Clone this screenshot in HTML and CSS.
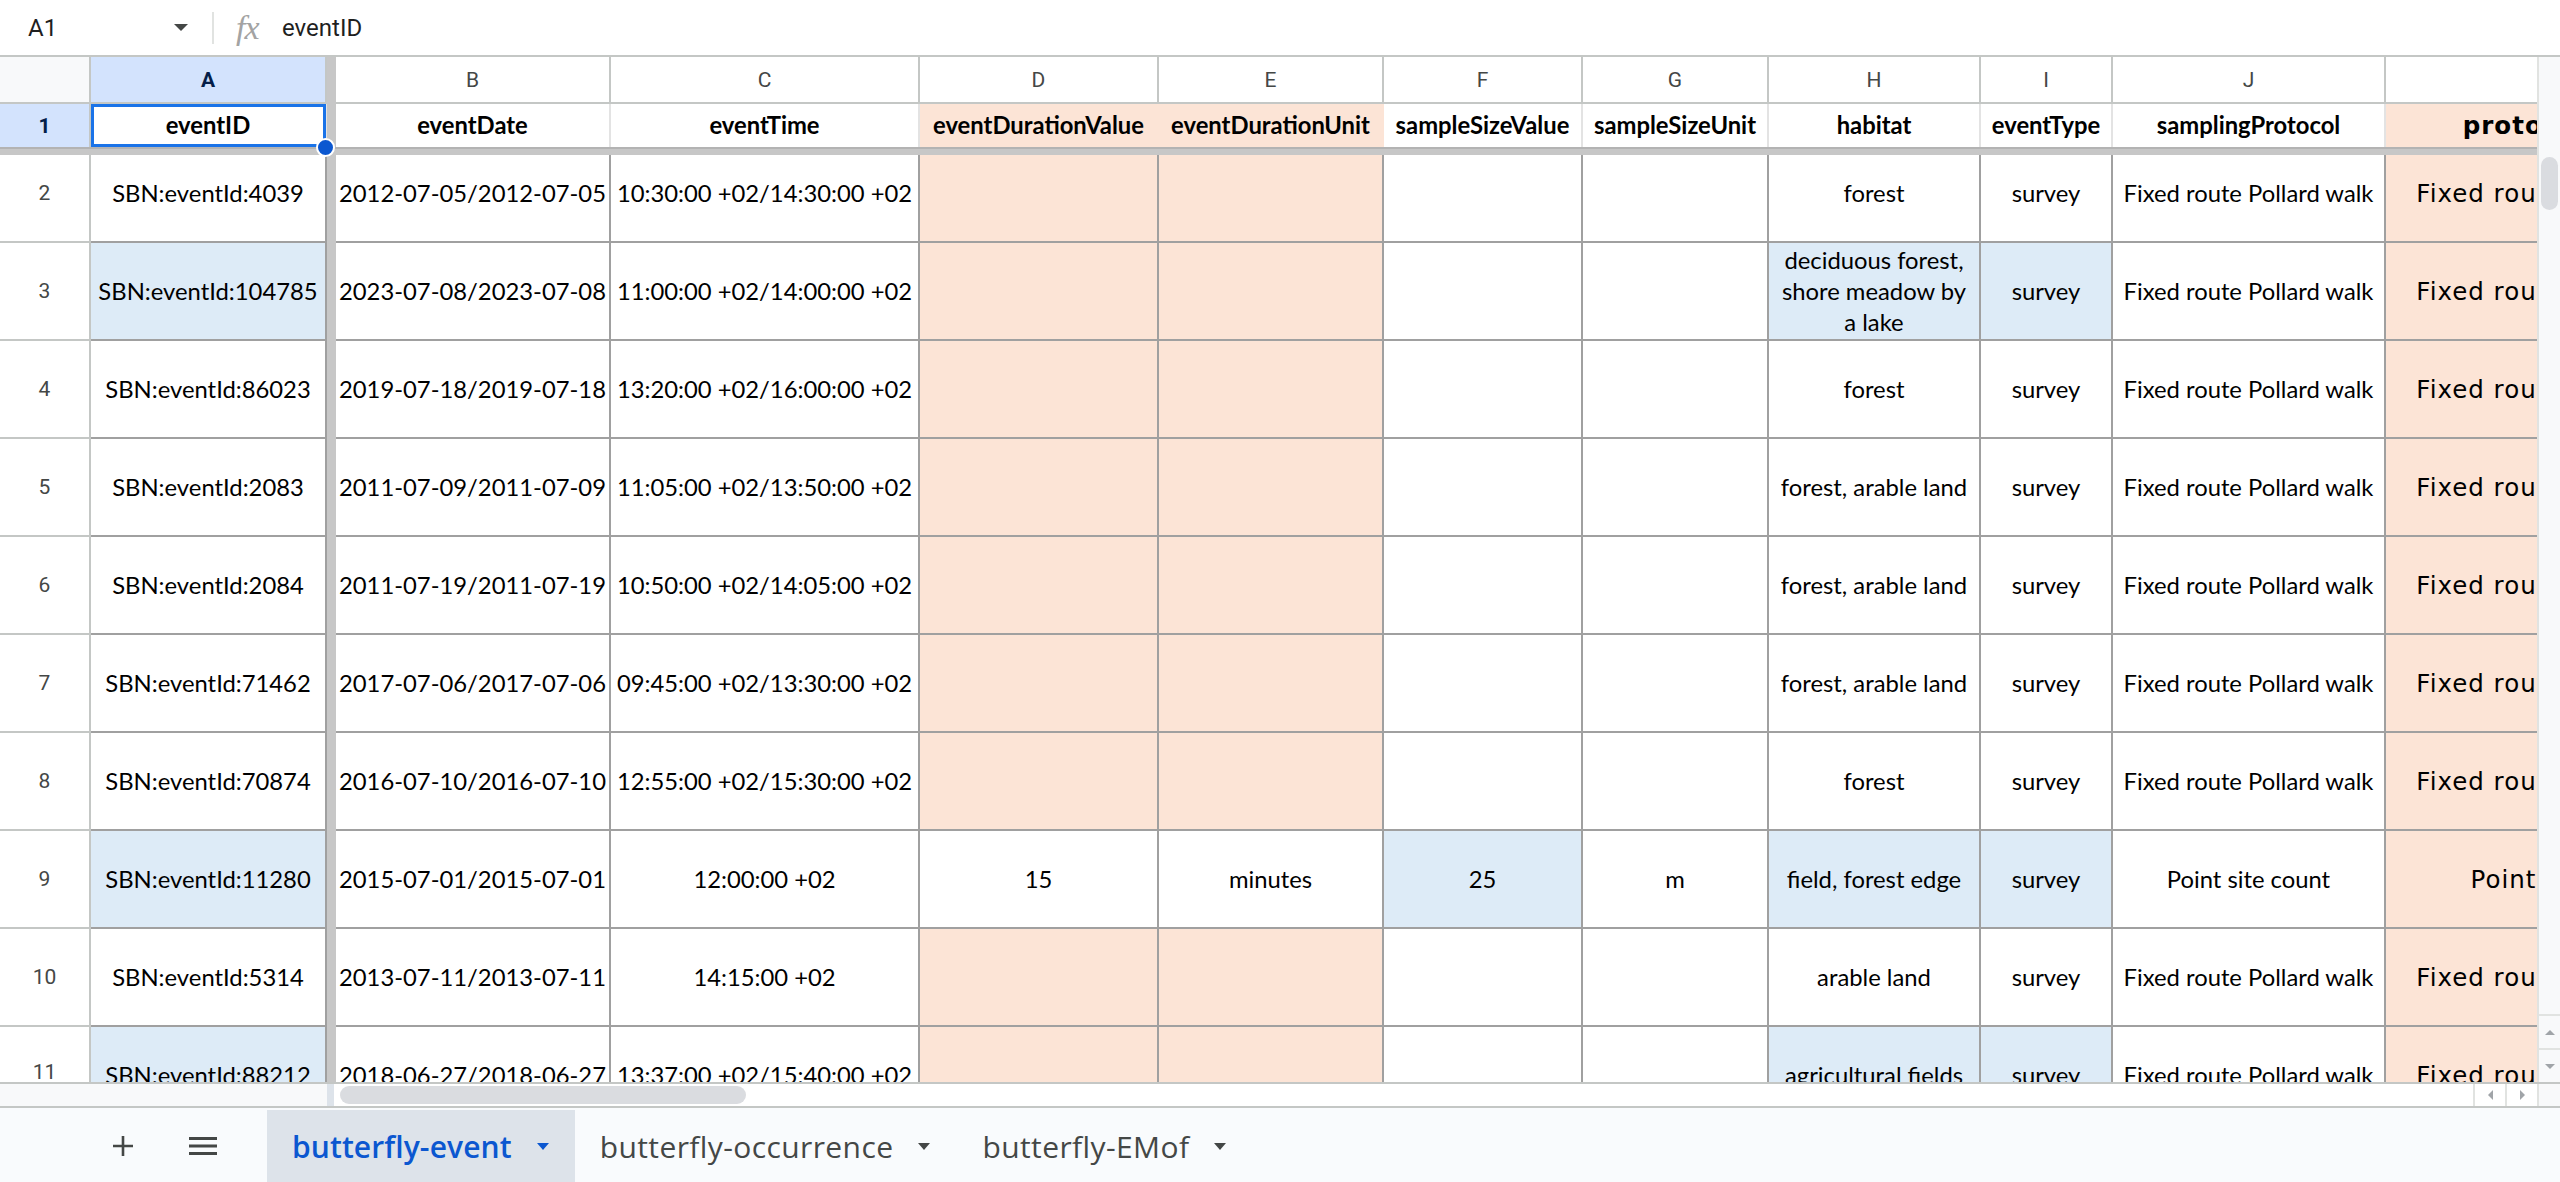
FILE: index.html
```html
<!DOCTYPE html>
<html>
<head>
<meta charset="utf-8">
<title>butterfly-event</title>
<link rel="stylesheet" href="styles.css">
</head>
<body>
<div class="app">
  <div class="fbar">
    <div class="namebox"><span>A1</span><span class="caret"></span></div>
    <div class="divider"></div>
    <div class="fx">fx</div>
    <div class="ftext">eventID</div>
  </div>

  <div class="grid">
    <div class="vband"></div>
    <div class="hband"></div>
    <div class="vscroll">
      <div class="vthumb"></div>
      <div class="vspacer"></div>
      <div class="varrow"><span class="tri-up"></span></div>
      <div class="varrow"><span class="tri-down"></span></div>
    </div>

    <div class="row">
      <div class="corner"></div>
      <div class="ch sel">A</div>
      <div class="ch">B</div>
      <div class="ch">C</div>
      <div class="ch">D</div>
      <div class="ch">E</div>
      <div class="ch">F</div>
      <div class="ch">G</div>
      <div class="ch">H</div>
      <div class="ch">I</div>
      <div class="ch">J</div>
      <div class="ch last"></div>
    </div>

    <div class="row r1">
      <div class="rh sel">1</div>
      <div class="hd a1">eventID<span class="handle"></span></div>
      <div class="hd">eventDate</div>
      <div class="hd">eventTime</div>
      <div class="hd p">eventDurationValue</div>
      <div class="hd p">eventDurationUnit</div>
      <div class="hd">sampleSizeValue</div>
      <div class="hd">sampleSizeUnit</div>
      <div class="hd">habitat</div>
      <div class="hd">eventType</div>
      <div class="hd">samplingProtocol</div>
      <div class="hd p k"><span class="kin">protocolNames</span></div>
    </div>

    <div class="row r2">
      <div class="rh">2</div>
      <div class="c">SBN:eventId:4039</div>
      <div class="c">2012-07-05/2012-07-05</div>
      <div class="c">10:30:00 +02/14:30:00 +02</div>
      <div class="c p"></div>
      <div class="c p"></div>
      <div class="c"></div>
      <div class="c"></div>
      <div class="c">forest</div>
      <div class="c">survey</div>
      <div class="c">Fixed route Pollard walk</div>
      <div class="c p k"><span class="kin">Fixed route Pollard walk</span></div>
    </div>

    <div class="row">
      <div class="rh">3</div>
      <div class="c b">SBN:eventId:104785</div>
      <div class="c">2023-07-08/2023-07-08</div>
      <div class="c">11:00:00 +02/14:00:00 +02</div>
      <div class="c p"></div>
      <div class="c p"></div>
      <div class="c"></div>
      <div class="c"></div>
      <div class="c b">deciduous forest,<br>shore meadow by<br>a lake</div>
      <div class="c b">survey</div>
      <div class="c">Fixed route Pollard walk</div>
      <div class="c p k"><span class="kin">Fixed route Pollard walk</span></div>
    </div>

    <div class="row">
      <div class="rh">4</div>
      <div class="c">SBN:eventId:86023</div>
      <div class="c">2019-07-18/2019-07-18</div>
      <div class="c">13:20:00 +02/16:00:00 +02</div>
      <div class="c p"></div>
      <div class="c p"></div>
      <div class="c"></div>
      <div class="c"></div>
      <div class="c">forest</div>
      <div class="c">survey</div>
      <div class="c">Fixed route Pollard walk</div>
      <div class="c p k"><span class="kin">Fixed route Pollard walk</span></div>
    </div>

    <div class="row">
      <div class="rh">5</div>
      <div class="c">SBN:eventId:2083</div>
      <div class="c">2011-07-09/2011-07-09</div>
      <div class="c">11:05:00 +02/13:50:00 +02</div>
      <div class="c p"></div>
      <div class="c p"></div>
      <div class="c"></div>
      <div class="c"></div>
      <div class="c">forest, arable land</div>
      <div class="c">survey</div>
      <div class="c">Fixed route Pollard walk</div>
      <div class="c p k"><span class="kin">Fixed route Pollard walk</span></div>
    </div>

    <div class="row">
      <div class="rh">6</div>
      <div class="c">SBN:eventId:2084</div>
      <div class="c">2011-07-19/2011-07-19</div>
      <div class="c">10:50:00 +02/14:05:00 +02</div>
      <div class="c p"></div>
      <div class="c p"></div>
      <div class="c"></div>
      <div class="c"></div>
      <div class="c">forest, arable land</div>
      <div class="c">survey</div>
      <div class="c">Fixed route Pollard walk</div>
      <div class="c p k"><span class="kin">Fixed route Pollard walk</span></div>
    </div>

    <div class="row">
      <div class="rh">7</div>
      <div class="c">SBN:eventId:71462</div>
      <div class="c">2017-07-06/2017-07-06</div>
      <div class="c">09:45:00 +02/13:30:00 +02</div>
      <div class="c p"></div>
      <div class="c p"></div>
      <div class="c"></div>
      <div class="c"></div>
      <div class="c">forest, arable land</div>
      <div class="c">survey</div>
      <div class="c">Fixed route Pollard walk</div>
      <div class="c p k"><span class="kin">Fixed route Pollard walk</span></div>
    </div>

    <div class="row">
      <div class="rh">8</div>
      <div class="c">SBN:eventId:70874</div>
      <div class="c">2016-07-10/2016-07-10</div>
      <div class="c">12:55:00 +02/15:30:00 +02</div>
      <div class="c p"></div>
      <div class="c p"></div>
      <div class="c"></div>
      <div class="c"></div>
      <div class="c">forest</div>
      <div class="c">survey</div>
      <div class="c">Fixed route Pollard walk</div>
      <div class="c p k"><span class="kin">Fixed route Pollard walk</span></div>
    </div>

    <div class="row">
      <div class="rh">9</div>
      <div class="c b">SBN:eventId:11280</div>
      <div class="c">2015-07-01/2015-07-01</div>
      <div class="c">12:00:00 +02</div>
      <div class="c">15</div>
      <div class="c">minutes</div>
      <div class="c b">25</div>
      <div class="c">m</div>
      <div class="c b">field, forest edge</div>
      <div class="c b">survey</div>
      <div class="c">Point site count</div>
      <div class="c p k"><span class="kin">Point site count</span></div>
    </div>

    <div class="row">
      <div class="rh">10</div>
      <div class="c">SBN:eventId:5314</div>
      <div class="c">2013-07-11/2013-07-11</div>
      <div class="c">14:15:00 +02</div>
      <div class="c p"></div>
      <div class="c p"></div>
      <div class="c"></div>
      <div class="c"></div>
      <div class="c">arable land</div>
      <div class="c">survey</div>
      <div class="c">Fixed route Pollard walk</div>
      <div class="c p k"><span class="kin">Fixed route Pollard walk</span></div>
    </div>

    <div class="row r11">
      <div class="rh">11</div>
      <div class="c b">SBN:eventId:88212</div>
      <div class="c">2018-06-27/2018-06-27</div>
      <div class="c">13:37:00 +02/15:40:00 +02</div>
      <div class="c p"></div>
      <div class="c p"></div>
      <div class="c"></div>
      <div class="c"></div>
      <div class="c b">agricultural fields</div>
      <div class="c b">survey</div>
      <div class="c">Fixed route Pollard walk</div>
      <div class="c p k"><span class="kin">Fixed route Pollard walk</span></div>
    </div>
  </div>

  <div class="hscroll">
    <div class="hs-left"></div>
    <div class="hs-band"></div>
    <div class="hs-track"><div class="hthumb"></div></div>
    <div class="harrow"><span class="tri-left"></span></div>
    <div class="harrow"><span class="tri-right"></span></div>
    <div class="hs-corner"></div>
  </div>

  <div class="tabbar">
    <div class="tbtn plus">
      <svg width="22" height="22" viewBox="0 0 22 22"><path d="M11 1v20M1 11h20" stroke="#444746" stroke-width="2.6" fill="none"/></svg>
    </div>
    <div class="tbtn menu">
      <svg width="28" height="18" viewBox="0 0 28 18"><path d="M0 1.5h28M0 9h28M0 16.5h28" stroke="#444746" stroke-width="2.8" fill="none"/></svg>
    </div>
    <div class="tab active"><span class="tname">butterfly-event</span><span class="tcaret"></span></div>
    <div class="tab"><span class="tname">butterfly-occurrence</span><span class="tcaret"></span></div>
    <div class="tab"><span class="tname">butterfly-EMof</span><span class="tcaret"></span></div>
  </div>
</div>
</body>
</html>
```

FILE: styles.css
```css
* { box-sizing: border-box; }
html, body { margin: 0; padding: 0; }
body {
  width: 2560px;
  height: 1182px;
  overflow: hidden;
  background: #fff;
  font-family: Roboto, "Liberation Sans", sans-serif;
}
.app { display: flex; flex-direction: column; width: 2560px; height: 1182px; }

/* formula bar */
.fbar {
  flex: none;
  height: 57px;
  display: flex;
  align-items: center;
  border-bottom: 2px solid #c4c7c5;
}
.namebox {
  width: 212px;
  display: flex;
  align-items: center;
  justify-content: space-between;
  padding: 0 24px 0 28px;
  font-size: 24px;
  color: #1f1f1f;
}
.caret {
  width: 0; height: 0;
  border-left: 7px solid transparent;
  border-right: 7px solid transparent;
  border-top: 7px solid #444746;
}
.divider { width: 2px; height: 32px; background: #e1e3e1; }
.fx {
  margin-left: 22px;
  width: 46px;
  font-family: "Liberation Serif", serif;
  font-style: italic;
  font-size: 34px;
  color: #a3a3a3;
  letter-spacing: -1px;
}
.ftext { font-size: 24px; color: #1f1f1f; }

/* grid */
.grid {
  flex: none;
  display: grid;
  grid-template-columns: 91px 236px 9px 275px 309px 239px 225px 199px 186px 212px 132px 273px 151px 23px;
  grid-template-rows: 47px 43px 8px 88px repeat(8, 98px) 55px;
}
.row { display: contents; }
.vband { grid-column: 3; grid-row: 1 / -1; background: #c7c7c7; position: relative; z-index: 1; }
.hband { grid-column: 1 / 14; grid-row: 3; background: #c7c7c7; border-top: 2px solid #b3b3b3; position: relative; z-index: 1; }

.vscroll {
  grid-column: 14;
  grid-row: 1 / -1;
  background: #f8f9fa;
  border-left: 2px solid #e1e3e1;
  display: flex;
  flex-direction: column;
}
.vthumb {
  margin: 100px 0 0 2px;
  width: 17px;
  height: 53px;
  border-radius: 9px;
  background: #dadce0;
}
.vspacer { flex: 1; }
.varrow {
  height: 34px;
  border-top: 2px solid #e1e3e1;
  display: flex;
  align-items: center;
  justify-content: center;
}
.tri-up { width: 0; height: 0; border-left: 5px solid transparent; border-right: 5px solid transparent; border-bottom: 5px solid #a0a4a8; }
.tri-down { width: 0; height: 0; border-left: 5px solid transparent; border-right: 5px solid transparent; border-top: 5px solid #a0a4a8; }

.corner {
  background: #f8f9fa;
  border-right: 2px solid #c4c7c5;
  border-bottom: 2px solid #c4c7c5;
}
.ch {
  display: flex;
  align-items: center;
  justify-content: center;
  font-size: 21px;
  color: #444746;
  background: #fff;
  border-right: 2px solid #c4c7c5;
  border-bottom: 2px solid #c4c7c5;
}
.ch.last { border-right: none; }
.ch.sel { background: #d3e3fd; color: #041e49; font-weight: 700; }

.rh {
  display: flex;
  align-items: center;
  justify-content: center;
  font-size: 21px;
  color: #444746;
  background: #fff;
  border-right: 2px solid #c4c7c5;
  border-bottom: 2px solid #c4c7c5;
  overflow: hidden;
}
.rh.sel { background: #d3e3fd; color: #041e49; font-weight: 700; border-bottom: none; }

.hd, .c {
  display: flex;
  align-items: center;
  justify-content: center;
  text-align: center;
  font-family: Lato, "Liberation Sans", sans-serif;
  font-size: 23.8px;
  line-height: 31px;
  color: #000;
  background: #fff;
  overflow: hidden;
  white-space: nowrap;
}
.hd {
  font-weight: 700;
  border-right: 2px solid #e3e3e3;
}
.hd.p { border-right-color: transparent; }
.c {
  border-right: 2px solid #a0a0a0;
  border-bottom: 2px solid #a0a0a0;
}
.p { background: #fce4d6; }
.b { background: #ddebf7; }

.a1 { position: relative; z-index: 2; overflow: visible; }
.a1::before {
  content: "";
  position: absolute;
  top: 0; left: 0; right: -1px; bottom: 0;
  border: 3px solid #1a73e8;
}
.handle {
  position: absolute;
  right: -10px;
  bottom: -10px;
  width: 19px;
  height: 19px;
  border-radius: 50%;
  background: #0b57d0;
  border: 2px solid #fff;
  z-index: 3;
}

.k { justify-content: flex-start; border-right: none; }
.kin {
  flex: none;
  width: 375px;
  text-align: center;
  font-family: "DejaVu Sans", Verdana, sans-serif;
  font-size: 24.5px;
  letter-spacing: 1px;
}

.r2 > .c, .r2 > .rh { padding-bottom: 10px; }
.r11 > .c, .r11 > .rh { align-items: flex-start; padding-top: 33px; border-bottom: none; }

/* horizontal scroll */
.hscroll {
  flex: none;
  height: 26px;
  display: flex;
  border-top: 2px solid #c4c7c5;
  border-bottom: 2px solid #c4c7c5;
}
.hs-left { width: 327px; background: #f8f9fa; }
.hs-band { width: 9px; background: #dde3ea; border-right: 2px solid #fff; }
.hs-track { flex: 1; display: flex; align-items: center; background: #fff; }
.hthumb { margin-left: 4px; width: 406px; height: 18px; border-radius: 9px; background: #dadce0; }
.harrow {
  width: 32px;
  border-left: 2px solid #e1e3e1;
  display: flex;
  align-items: center;
  justify-content: center;
  background: #fff;
}
.tri-left { width: 0; height: 0; border-top: 5px solid transparent; border-bottom: 5px solid transparent; border-right: 5px solid #a0a4a8; }
.tri-right { width: 0; height: 0; border-top: 5px solid transparent; border-bottom: 5px solid transparent; border-left: 5px solid #a0a4a8; }
.hs-corner { width: 23px; background: #f8f9fa; border-left: 2px solid #e1e3e1; }

/* tab bar */
.tabbar {
  flex: 1;
  display: flex;
  align-items: stretch;
  background: #f9fbfd;
  padding-top: 2px;
}
.tbtn { width: 40px; display: flex; align-items: center; justify-content: center; }
.tbtn.plus { margin-left: 103px; }
.tbtn.menu { margin-left: 40px; margin-right: 44px; }
.tab {
  display: flex;
  align-items: center;
  padding: 0 27px 0 25px;
  font-family: "Open Sans", Roboto, sans-serif;
  font-size: 30px;
  color: #444746;
  letter-spacing: 0.4px;
}
.tab.active { background: #dde3ea; color: #0b57d0; font-weight: 600; letter-spacing: 0.1px; padding-right: 26px; }
.tname { margin-right: 25px; }
.tcaret {
  width: 0; height: 0;
  border-left: 6px solid transparent;
  border-right: 6px solid transparent;
  border-top: 7px solid #444746;
}
.tab.active .tcaret { border-top-color: #0b57d0; }
```
